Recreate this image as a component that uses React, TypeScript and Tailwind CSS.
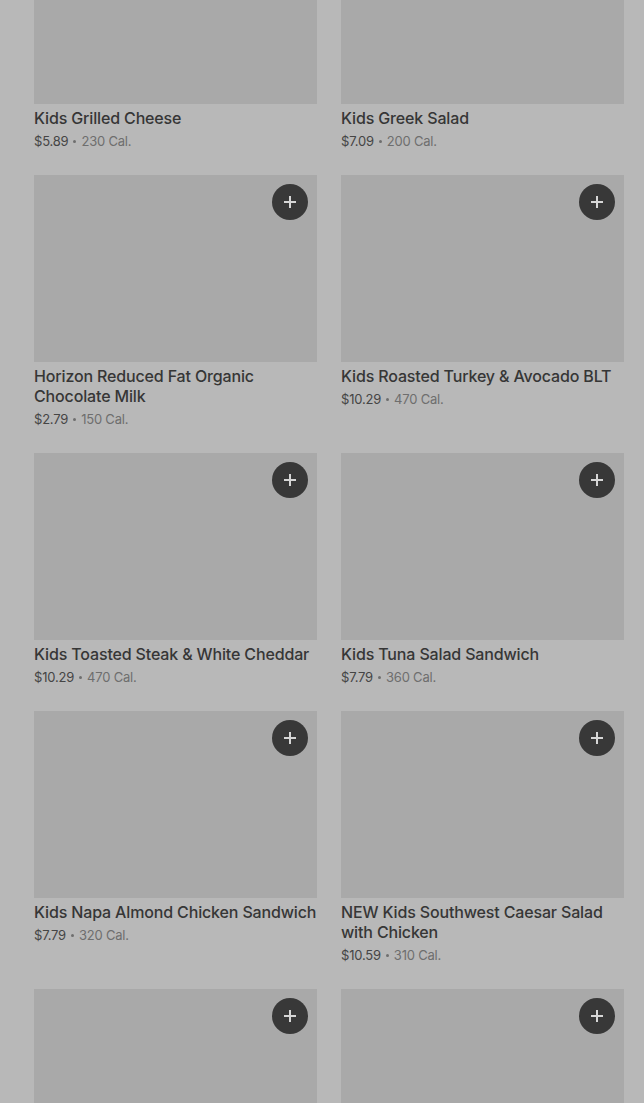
import React from 'react';

interface Item {
  name: string;
  price: string;
  cal: string;
}

const items: Item[] = [
  { name: 'Kids Grilled Cheese', price: '$5.89', cal: '230 Cal.' },
  { name: 'Kids Greek Salad', price: '$7.09', cal: '200 Cal.' },
  { name: 'Horizon Reduced Fat Organic Chocolate Milk', price: '$2.79', cal: '150 Cal.' },
  { name: 'Kids Roasted Turkey & Avocado BLT', price: '$10.29', cal: '470 Cal.' },
  { name: 'Kids Toasted Steak & White Cheddar', price: '$10.29', cal: '470 Cal.' },
  { name: 'Kids Tuna Salad Sandwich', price: '$7.79', cal: '360 Cal.' },
  { name: 'Kids Napa Almond Chicken Sandwich', price: '$7.79', cal: '320 Cal.' },
  { name: 'NEW Kids Southwest Caesar Salad with Chicken', price: '$10.59', cal: '310 Cal.' },
  { name: '', price: '', cal: '' },
  { name: '', price: '', cal: '' },
];

function AddButton() {
  return (
    <button className="absolute top-[9px] right-[9px] w-9 h-9 rounded-full bg-[#383838] flex items-center justify-center">
      <svg width="14" height="14" viewBox="0 0 14 14" fill="none">
        <path d="M7 1v12M1 7h12" stroke="#d6d6d6" strokeWidth="2" />
      </svg>
    </button>
  );
}

function MenuCard({ item, first }: { item: Item; first: boolean }) {
  return (
    <div className="flex flex-col">
      <div className="relative h-[187px] bg-[#a9a9a9]">{!first && <AddButton />}</div>
      {item.name && (
        <>
          <div className="mt-1 text-[16px] leading-5 font-medium tracking-[-0.15px] text-[#363636]">
            {item.name}
          </div>
          <div className="mt-1 flex items-center text-[13px] leading-[18px] tracking-[-0.2px] text-[#6e6e6e]">
            <span className="text-[#454545]">{item.price}</span>
            <span className="mx-[5px] w-[3px] h-[3px] rounded-full bg-[#6e6e6e]" />
            <span>{item.cal}</span>
          </div>
        </>
      )}
    </div>
  );
}

export default function App() {
  return (
    <div
      className="h-[1103px] overflow-hidden bg-[#b8b8b8]"
      style={{ fontFamily: 'Inter, "Noto Sans", sans-serif' }}
    >
      <div className="mt-[-83px] pl-[34px] pr-[20px] grid grid-cols-2 gap-x-6 gap-y-[25px]">
        {items.map((item, i) => (
          <MenuCard key={i} item={item} first={i < 2} />
        ))}
      </div>
    </div>
  );
}
